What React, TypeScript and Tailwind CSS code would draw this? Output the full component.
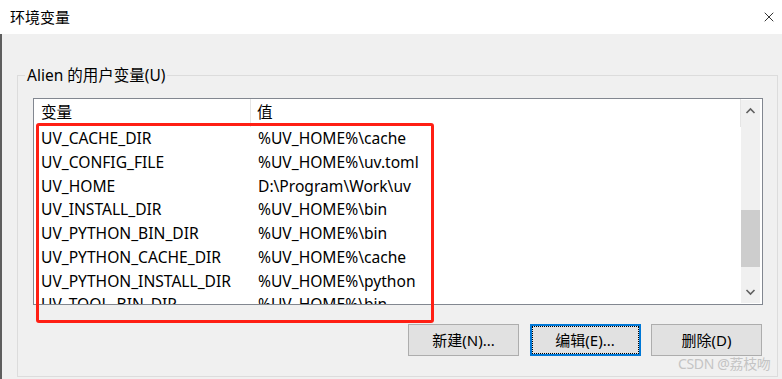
import { X } from "lucide-react";

const rows = [
  ["UV_CACHE_DIR", "%UV_HOME%\\cache"],
  ["UV_CONFIG_FILE", "%UV_HOME%\\uv.toml"],
  ["UV_HOME", "D:\\Program\\Work\\uv"],
  ["UV_INSTALL_DIR", "%UV_HOME%\\bin"],
  ["UV_PYTHON_BIN_DIR", "%UV_HOME%\\bin"],
  ["UV_PYTHON_CACHE_DIR", "%UV_HOME%\\cache"],
  ["UV_PYTHON_INSTALL_DIR", "%UV_HOME%\\python"],
  ["UV_TOOL_BIN_DIR", "%UV_HOME%\\bin"],
];

const font = { fontFamily: '"Noto Sans", "Noto Sans CJK SC", sans-serif' };

function Btn({ label, focused }: { label: string; focused?: boolean }) {
  return (
    <button
      className={
        focused
          ? "w-[111px] h-[32px] bg-[#e1e1e1] border-2 border-[#0078d7] flex items-center justify-center text-[15px] text-black"
          : "w-[111px] h-[32px] bg-[#e1e1e1] border border-[#adadad] flex items-center justify-center text-[15px] text-black"
      }
    >
      {focused ? (
        <span className="w-full h-full border border-dotted border-black flex items-center justify-center">
          {label}
        </span>
      ) : (
        label
      )}
    </button>
  );
}

export default function App() {
  return (
    <div
      className="w-[782px] h-[379px] bg-[#f0f0f0] flex flex-col relative overflow-hidden text-black"
      style={font}
    >
      {/* title bar */}
      <div className="h-[34px] bg-white flex items-center justify-between pl-[10px] pr-[4px] shrink-0">
        <span className="text-[15px] leading-none">环境变量</span>
        <X size={16} strokeWidth={1.2} className="text-black mr-[1px]" />
      </div>

      <div className="flex-1 border-l-2 border-[#5e5e5e] pl-[15px] pr-[4px] pt-[41px]">
        {/* group box */}
        <div className="relative h-[302px] border border-[#dcdcdc] pl-[15px] pr-[14px] pt-[22px]">
          <span className="absolute -top-[11px] left-[7px] bg-[#f0f0f0] px-[2px] text-[15.5px] leading-[20px]">
            Alien 的用户变量(U)
          </span>

          {/* list view */}
          <div className="h-[207px] bg-white border border-[#828790] flex overflow-hidden">
            <div className="flex-1 flex flex-col overflow-hidden">
              <div className="h-[28px] shrink-0 flex text-[15.6px]">
                <div className="w-[217px] pl-[7px] border-r border-[#e5e5e5] flex items-center">变量</div>
                <div className="flex-1 pl-[6px] border-r border-[#e5e5e5] flex items-center">值</div>
              </div>
              {rows.map(([k, v]) => (
                <div key={k} className="h-[23.75px] shrink-0 flex items-center text-[15.6px] leading-none">
                  <div className="w-[218px] pl-[7px] whitespace-nowrap">{k}</div>
                  <div className="flex-1 pl-[6px] whitespace-nowrap">{v}</div>
                </div>
              ))}
            </div>
            {/* scrollbar */}
            <div className="w-[19px] mr-[2px] my-[1px] bg-[#f0f0f0] flex flex-col items-center">
              <svg width="19" height="22" viewBox="0 0 19 22" className="shrink-0">
                <path d="M5.5 13 L9.5 9 L13.5 13" fill="none" stroke="#606060" strokeWidth="1.6" />
              </svg>
              <div className="h-[88px]" />
              <div className="w-full h-[57px] bg-[#cdcdcd]" />
              <div className="flex-1" />
              <svg width="19" height="22" viewBox="0 0 19 22" className="shrink-0">
                <path d="M5.5 9 L9.5 13 L13.5 9" fill="none" stroke="#606060" strokeWidth="1.6" />
              </svg>
            </div>
          </div>

          {/* buttons */}
          <div className="flex justify-end gap-[10.5px] mt-[19px] mr-[1px]">
            <Btn label="新建(N)..." />
            <Btn label="编辑(E)..." focused />
            <Btn label="删除(D)" />
          </div>
        </div>
      </div>

      {/* red annotation */}
      <div className="absolute left-[36px] top-[123px] w-[398px] h-[200px] border-[3px] border-[#ff1f14] rounded-[3px] pointer-events-none" />

      {/* watermark */}
      <span className="absolute left-[678px] top-[353px] text-[14px] text-[#c4c4c4] tracking-tight">
        CSDN @荔枝吻
      </span>
    </div>
  );
}
